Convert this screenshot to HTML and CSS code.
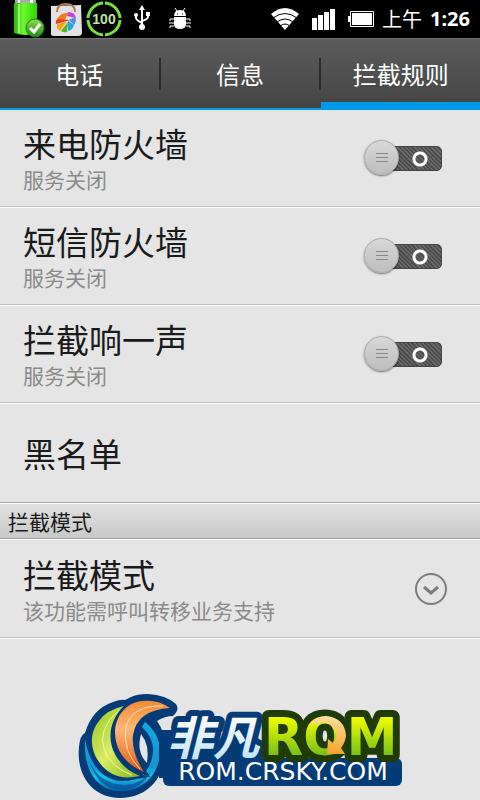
FILE: index.html
```html
<!DOCTYPE html>
<html lang="zh-CN">
<head>
    <meta charset="UTF-8">
    <meta name="viewport" content="width=device-width, initial-scale=1.0">
    <title>拦截规则</title>
    <link rel="stylesheet" href="styles.css">
</head>
<body>
    <header class="status-bar">
        <svg class="status-left" width="200" height="38" viewBox="0 0 200 38" aria-hidden="true">
            <defs>
                <linearGradient id="cell"><stop offset="0" stop-color="#24b800"/><stop offset="0.4" stop-color="#6dfa2c"/><stop offset="1" stop-color="#2bd400"/></linearGradient>
                <linearGradient id="check" x2="0" y2="1"><stop offset="0" stop-color="#8be04f"/><stop offset="1" stop-color="#1c8a10"/></linearGradient>
            </defs>
            <!-- battery -->
            <path d="M15 0h21v3H15z" fill="#aaa"/>
            <path d="M18 0h2v3h-2zM30 0h3v3h-3z" fill="#fff"/>
            <path d="M14 3h23v30q-11 4-23 0z" fill="url(#cell)"/>
            <path d="M18 4h2v29h-2z" fill="#fff" opacity="0.5"/>
            <circle cx="35" cy="28" r="9" fill="url(#check)" stroke="#2c7a1b"/>
            <path d="M30 28l4 4 6-8" fill="none" stroke="#fff" stroke-width="3"/>
            <!-- market bag -->
            <path d="M51 6l30-1 1 27q0 4-4 4H54q-4 0-3-4z" fill="#e2e2e2"/>
            <path d="M57 12q0-8 9-8t9 8" fill="none" stroke="#a87955" stroke-width="2"/>
            <path d="M57 19q4-7 11-6l-3 7z" fill="#f97b12"/>
            <path d="M68 12q7 0 8 6l-9-2z" fill="#c93fe0"/>
            <path d="M56 24q-1-5 3-5l11 1z" fill="#ef3a2f"/>
            <path d="M57 24l10-3-7 10q-4-2-3-7z" fill="#f9a51c"/>
            <path d="M61 31l7-9-1 10q-3 1-6-1z" fill="#4cba28"/>
            <path d="M68 31V21l6 4q-1 5-6 6z" fill="#26a4ea"/>
            <path d="M69 20l6-3q2 4-1 8z" fill="#4f8fe8"/>
            <!-- percent ring -->
            <circle cx="104" cy="19" r="16" fill="none" stroke="#79e23a" stroke-width="3"/>
            <path d="M104 1v5M104 32v6M86 19h5M117 19h6" stroke="#000" stroke-width="2"/>
            <text x="104" y="24" class="percent" text-anchor="middle">100</text>
            <!-- usb -->
            <g fill="none" stroke="#fff" stroke-width="2">
                <path d="M142 9v18M136 14v4q0 2 6 5M148 14v3q0 2-6 4"/>
            </g>
            <path d="M142 5l3 5h-6z" fill="#fff"/>
            <circle cx="142" cy="27" r="3" fill="#fff"/>
            <circle cx="136" cy="15" r="2" fill="#fff"/>
            <path d="M146 12h4v4h-4z" fill="#fff"/>
            <!-- debug bug -->
            <path d="M174 16q0-6 6-6t6 6zM174 17h12v7q0 5-6 5t-6-5z" fill="#fff"/>
            <path d="M175 8l2 3M185 8l-2 3M174 19h-4v2M174 23h-5M174 26h-4v2M186 19h4v2M186 23h5M186 26h4v2" fill="none" stroke="#fff"/>
            <path d="M177 14h1M182 14h1" stroke="#000"/>
        </svg>
        <div class="status-right">
            <svg width="104" height="38" viewBox="0 0 104 38" aria-hidden="true">
                <!-- wifi -->
                <path d="M1 14q14-12 28 0L15 30z" fill="#fff"/>
                <path d="M3 18q12-9 24 0M7 22q8-6 16 0M10 26q5-4 10 0" fill="none" stroke="#000"/>
                <!-- signal -->
                <path d="M42 18h5v12h-5zM48 15h5v15h-5zM54 12h5v18h-5zM60 9h5v21h-5z" fill="#fff"/>
                <!-- battery -->
                <path d="M80.500 11.500h23v15h-23z" fill="none" stroke="#fff"/>
                <path d="M82 13h20v12H82zM78 16h2v6h-2z" fill="#fff"/>
            </svg>
            <span class="ampm">上午</span>
            <span class="clock">1:26</span>
        </div>
    </header>

    <nav class="tabs">
        <button class="tab">电话</button>
        <button class="tab">信息</button>
        <button class="tab active">拦截规则</button>
    </nav>

    <main>
        <label class="row">
            <span class="row-text">
                <span class="title">来电防火墙</span>
                <span class="summary">服务关闭</span>
            </span>
            <input type="checkbox" class="switch">
        </label>
        <label class="row">
            <span class="row-text">
                <span class="title">短信防火墙</span>
                <span class="summary">服务关闭</span>
            </span>
            <input type="checkbox" class="switch">
        </label>
        <label class="row">
            <span class="row-text">
                <span class="title">拦截响一声</span>
                <span class="summary">服务关闭</span>
            </span>
            <input type="checkbox" class="switch">
        </label>
        <button class="row plain">
            <span class="title">黑名单</span>
        </button>

        <h2 class="section">拦截模式</h2>

        <button class="row">
            <span class="row-text">
                <span class="title">拦截模式</span>
                <span class="summary">该功能需呼叫转移业务支持</span>
            </span>
            <svg class="more" width="34" height="34" viewBox="0 0 34 34" aria-hidden="true">
                <circle cx="17" cy="17" r="15" fill="none" stroke="#7c7c7c" stroke-width="2"/>
                <path d="M10 15l7 6 7-6" fill="none" stroke="#7c7c7c" stroke-width="3"/>
            </svg>
        </button>
    </main>

    <footer class="brand">
        <svg width="330" height="110" viewBox="0 0 330 110" role="img" aria-label="非凡ROM">
            <defs>
                <linearGradient id="green" x1="0" y1="0" x2="1" y2="1"><stop offset="0" stop-color="#8fc31f"/><stop offset="0.5" stop-color="#dcec62"/><stop offset="1" stop-color="#7db71c"/></linearGradient>
                <linearGradient id="orange" x1="0" y1="0" x2="0" y2="1"><stop offset="0" stop-color="#f28a35"/><stop offset="0.4" stop-color="#fdb976"/><stop offset="1" stop-color="#e2590f"/></linearGradient>
                <linearGradient id="ring" x1="0" y1="0" x2="0" y2="1"><stop offset="0" stop-color="#14a7df"/><stop offset="0.65" stop-color="#1397d3"/><stop offset="0.8" stop-color="#19c3e6"/><stop offset="1" stop-color="#0765ad"/></linearGradient>
                <linearGradient id="ice" x1="0" y1="0" x2="0" y2="1"><stop offset="0.2" stop-color="#fff"/><stop offset="1" stop-color="#b5def6"/></linearGradient>
                <linearGradient id="lime" x1="0" y1="0" x2="0" y2="1"><stop offset="0.2" stop-color="#e9fa00"/><stop offset="0.9" stop-color="#64b51c"/></linearGradient>
                <linearGradient id="gold" x1="0" y1="0" x2="0" y2="1"><stop offset="0" stop-color="#ffdf9e"/><stop offset="1" stop-color="#f3a52c"/></linearGradient>
            </defs>
            <!-- swirl -->
            <path d="M4 57Q5 45 10 43Q17 19 38 12Q46 9 50 10Q61 3 73 4Q91 5 101 14Q105 20 98 26Q90 26 82 31Q91 43 90 62C89 90 71 108 45 108C19 108 1 87 4 57z" fill="#053c78"/>
            <path d="M10 49C8 80 22 101 45 101C69 101 85 84 85 60Q84 43 70 32L67 37Q79 48 78 62C76 83 62 92 46 91C26 90 14 72 10 49z" fill="url(#ring)"/>
            <path d="M14 70Q23 94 50 95Q67 94 77 80Q66 101 45 100Q23 99 14 70z" fill="#064c94" opacity="0.7"/>
            <path d="M49 16Q31 20 24 31C15 42 14 58 24 72Q38 92 65 86Q45 78 38 60C32 43 37 28 49 16z" fill="url(#green)" stroke="#053c78" stroke-width="5" paint-order="stroke"/>
            <path d="M42 22Q23 39 29 59Q35 77 57 85" fill="none" stroke="#f2f7a8"/>
            <path d="M95 18Q83 9 67 11C50 13 40 27 40 43Q41 70 69 82Q56 62 58 45Q62 20 95 18z" fill="url(#orange)" stroke="#053c78" stroke-width="5" paint-order="stroke"/>
            <path d="M88 16Q57 15 51 37Q47 61 65 79" fill="none" stroke="#ffe0b8"/>
            <path d="M66 44Q75 55 72 73Q61 62 66 44z" fill="#e5e5e5"/>
            <!-- wordmark -->
            <path d="M84 40h12v48H84z" fill="#053c78"/>
            <rect x="88" y="68" width="239" height="28" rx="6" fill="#053c78"/>
            <path d="M94 58h92v16H94z" fill="#053c78"/>
            <text x="92" y="65" class="logo-cn">非凡</text>
            <text x="189" y="65" class="logo-rom">ROM</text>
            <path d="M234 36Q240 26 251 26Q270 28 271 46Q270 53 266 58L270 64L252 64L253 49L258 53Q261 49 261 45Q260 35 251 33Q242 32 234 36z" fill="url(#gold)"/>
            <text x="208" y="90" class="logo-url" text-anchor="middle">ROM.CRSKY.COM</text>
        </svg>
    </footer>
</body>
</html>
```

FILE: styles.css
```css
*,
*::before,
*::after {
    box-sizing: border-box;
}

body {
    margin: 0;
    min-height: 100vh;
    background: #e5e5e5;
    color: #1a1a1a;
    font-family: "Noto Sans CJK SC", sans-serif;
}

button {
    border: none;
    background: none;
    color: inherit;
    font-family: inherit;
    cursor: pointer;
}

.status-bar {
    display: flex;
    justify-content: space-between;
    align-items: center;
    height: 38px;
    padding-right: 10px;
    background: #000;
    color: #fff;
    font-size: 20px;
    line-height: 38px;
}

.status-left,
.status-right svg {
    display: block;
}

.status-right {
    display: flex;
    align-items: center;
}

.ampm {
    margin-left: 8px;
}

.clock {
    margin-left: 8px;
    font-family: "Noto Sans", sans-serif;
    font-weight: bold;
}

.percent {
    fill: #b9e6a4;
    font: bold 14px "Liberation Sans", sans-serif;
}

.tabs {
    display: grid;
    grid-template-columns: repeat(3, 1fr);
    gap: 2px;
    height: 72px;
    border-top: 1px solid #6e6e6e;
    border-bottom: 2px solid #0099e5;
    background: linear-gradient(#5c5c5c, #434343);
}

.tab {
    position: relative;
    padding: 0;
    color: #fff;
    font-size: 24px;
    line-height: 69px;
}

.tab + .tab::before {
    content: "";
    position: absolute;
    left: -2px;
    top: 19px;
    width: 2px;
    height: 32px;
    background: #2b2b2b;
}

.tab.active::after {
    content: "";
    position: absolute;
    left: 0;
    right: 0;
    bottom: 0;
    height: 6px;
    background: #0099e5;
}

.row {
    display: flex;
    justify-content: space-between;
    align-items: center;
    width: 100%;
    min-height: 97px;
    margin: 0 0 1px;
    padding: 0 38px 0 23px;
    border-bottom: 1px solid #bcbcbc;
    box-shadow: 0 1px #fff;
    text-align: left;
    cursor: pointer;
}

.row.plain {
    border-bottom: none;
    box-shadow: none;
}

.row-text {
    display: flex;
    flex-direction: column;
}

.title {
    font-size: 33px;
    line-height: 42px;
}

.summary {
    color: #8a8a8a;
    font-size: 21px;
    line-height: 30px;
}

.switch {
    appearance: none;
    position: relative;
    width: 78px;
    height: 36px;
    margin: 0;
    cursor: pointer;
}

/* track with the ring on it */
.switch::before {
    content: "";
    position: absolute;
    left: 18px;
    right: 0;
    top: 6px;
    height: 25px;
    border: 1px solid #444;
    border-radius: 5px;
    background:
        radial-gradient(circle at 37px 12px, transparent 4px, #fff 5px, #fff 7px, transparent 8px),
        repeating-linear-gradient(45deg, #4b4b4b 0 1px, #696969 2px 3px);
}

/* knob with three grip lines */
.switch::after {
    content: "";
    position: absolute;
    left: 0;
    top: 0;
    width: 35px;
    height: 35px;
    border: 1px solid #aaa;
    border-radius: 50%;
    background:
        linear-gradient(#888, #888) center 12px / 12px 1px no-repeat,
        linear-gradient(#888, #888) center 16px / 12px 1px no-repeat,
        linear-gradient(#888, #888) center 20px / 12px 1px no-repeat,
        linear-gradient(#d8d8d8, #bdbdbd);
    box-shadow: 0 1px 2px rgba(0, 0, 0, 0.5);
}

.section {
    height: 37px;
    margin: 0 0 2px;
    padding-left: 8px;
    border-top: 1px solid #a6a6a6;
    border-bottom: 1px solid #a6a6a6;
    background: linear-gradient(#e2e2e2, #c9c9c9);
    box-shadow: inset 0 1px #fff, 0 1px #fff;
    font-size: 21px;
    font-weight: normal;
    line-height: 36px;
}

.more {
    margin-right: -6px;
}

.brand {
    display: flex;
    justify-content: center;
    padding-top: 51px;
}

.logo-cn {
    fill: url(#ice);
    stroke: #053c78;
    stroke-width: 12px;
    stroke-linejoin: round;
    paint-order: stroke;
    font: italic bold 46px "Noto Sans CJK SC", sans-serif;
}

.logo-rom {
    fill: url(#lime);
    stroke: #1f3c08;
    stroke-width: 14px;
    stroke-linejoin: round;
    paint-order: stroke;
    font: bold 51px "DejaVu Sans", sans-serif;
}

.logo-url {
    fill: #fff;
    font: 25px "DejaVu Sans", sans-serif;
}
```
